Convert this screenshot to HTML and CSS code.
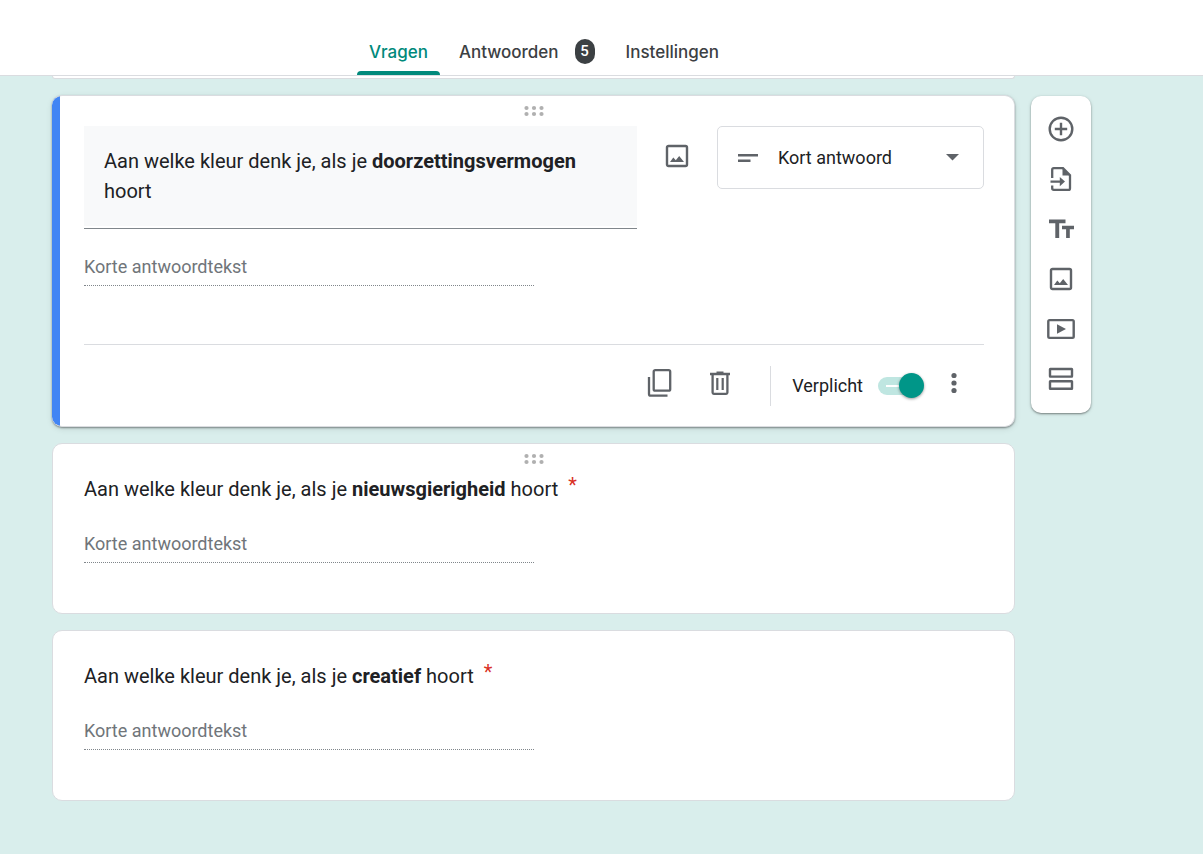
FILE: index.html
```html
<!DOCTYPE html>
<html lang="nl">
<head>
<meta charset="utf-8">
<meta name="viewport" content="width=device-width, initial-scale=1">
<title>Formulier bewerken</title>
<link rel="stylesheet" href="styles.css">
</head>
<body>
<header class="topbar">
  <nav class="tabs">
    <a class="tab tab-active" href="#vragen">Vragen</a>
    <a class="tab" href="#antwoorden">Antwoorden <span class="badge">5</span></a>
    <a class="tab" href="#instellingen">Instellingen</a>
  </nav>
</header>
<main class="editor">
  <div class="cards">
    <div class="card card-previous"></div>

    <section class="card card-active">
      <div class="drag"><svg width="20" height="12" viewBox="0 0 20 12"><g fill="#b0b0b0"><circle cx="2.5" cy="3" r="2.1"/><circle cx="10" cy="3" r="2.1"/><circle cx="17.500" cy="3" r="2.1"/><circle cx="2.5" cy="9" r="2.1"/><circle cx="10" cy="9" r="2.1"/><circle cx="17.500" cy="9" r="2.1"/></g></svg></div>
      <div class="question-row">
        <div class="question-box">
          <div class="question-edit" contenteditable="true" role="textbox" aria-label="Vraag" spellcheck="false">Aan welke kleur denk je, als je <b>doorzettingsvermogen</b> hoort</div>
        </div>
        <button class="icon-button image-button" type="button" aria-label="Afbeelding toevoegen">
          <svg width="24" height="24" viewBox="0 0 24 24"><rect x="2" y="2" width="20" height="20" rx="1.500" fill="none" stroke="#5f6368" stroke-width="2.400"/><path d="M5 18l3.300-4.600 2.500 2.900 3.400-4.300L19 18z" fill="#5f6368"/></svg>
        </button>
        <div class="type-picker">
          <svg width="20" height="8" viewBox="0 0 20 8"><path d="M0 0h20v2.500H0zM0 5.500h12.500V8H0z" fill="#5f6368"/></svg>
          <select class="type-select" aria-label="Vraagtype"><option>Kort antwoord</option></select>
          <svg class="type-arrow" width="13" height="7" viewBox="0 0 13 7"><path d="M0 0h13L6.500 6.500z" fill="#5f6368"/></svg>
        </div>
      </div>
      <input class="answer" type="text" placeholder="Korte antwoordtekst" aria-label="Korte antwoordtekst" disabled>
      <div class="card-footer">
        <button class="icon-button" type="button" aria-label="Dupliceren">
          <svg width="26" height="30" viewBox="0 0 26 30"><rect x="6.700" y="2.200" width="16.500" height="20.500" rx="1.500" fill="none" stroke="#5f6368" stroke-width="2.300"/><path d="M2 9v17q0 1.700 1.700 1.700H20.500" fill="none" stroke="#5f6368" stroke-width="2.300"/></svg>
        </button>
        <button class="icon-button" type="button" aria-label="Verwijderen">
          <svg width="20" height="24" viewBox="0 0 20 24"><path d="M6.500 0.500h7v1.300H20v2.500H0V1.800h6.500z" fill="#5f6368"/><path d="M2.600 3.500v18.100q0 1.200 1.200 1.200h12.400q1.200 0 1.200-1.200V3.500" fill="none" stroke="#5f6368" stroke-width="2.300"/><path d="M7.300 7v12M12.700 7v12" stroke="#5f6368" stroke-width="2.200"/></svg>
        </button>
        <label class="required">Verplicht<input class="toggle" type="checkbox" role="switch" checked></label>
        <button class="icon-button more-button" type="button" aria-label="Meer opties">
          <svg width="6" height="22" viewBox="0 0 6 22"><g fill="#5f6368"><circle cx="3" cy="3.500" r="2.600"/><circle cx="3" cy="11" r="2.600"/><circle cx="3" cy="18.500" r="2.600"/></g></svg>
        </button>
      </div>
    </section>

    <section class="card">
      <div class="drag"><svg width="20" height="12" viewBox="0 0 20 12"><g fill="#b0b0b0"><circle cx="2.5" cy="3" r="2.1"/><circle cx="10" cy="3" r="2.1"/><circle cx="17.500" cy="3" r="2.1"/><circle cx="2.5" cy="9" r="2.1"/><circle cx="10" cy="9" r="2.1"/><circle cx="17.500" cy="9" r="2.1"/></g></svg></div>
      <div class="question">Aan welke kleur denk je, als je <b>nieuwsgierigheid</b> hoort<span class="star">*</span></div>
      <input class="answer" type="text" placeholder="Korte antwoordtekst" aria-label="Korte antwoordtekst" disabled>
    </section>

    <section class="card">
      <div class="drag"></div>
      <div class="question">Aan welke kleur denk je, als je <b>creatief</b> hoort<span class="star">*</span></div>
      <input class="answer" type="text" placeholder="Korte antwoordtekst" aria-label="Korte antwoordtekst" disabled>
    </section>
  </div>

  <aside class="tools">
    <button class="tool" type="button" aria-label="Vraag toevoegen">
      <svg width="26" height="26" viewBox="0 0 26 26"><g fill="none" stroke="#5f6368" stroke-width="2.400"><circle cx="13" cy="13" r="11.300"/><path d="M13 6.800v12.400M6.800 13h12.400"/></g></svg>
    </button>
    <button class="tool" type="button" aria-label="Vragen importeren">
      <svg width="22" height="26" viewBox="0 0 22 26"><path d="M2.200 12V3.700q0-1.500 1.500-1.500h9.300l7 7v13q0 1.700-1.600 1.700H3.800q-1.600 0-1.600-1.600V19.500" fill="none" stroke="#5f6368" stroke-width="2.300"/><path d="M12.500 1.500v8h8zM0.500 14.400h9.300V11l5.200 4.600-5.200 4.600v-3.400H.5z" fill="#5f6368"/></svg>
    </button>
    <button class="tool" type="button" aria-label="Titel en beschrijving toevoegen">
      <svg width="26" height="22" viewBox="0 0 26 22"><path d="M1 1.500h16.500v3.700h-6.300V20H7.300V5.200H1zM14 7.800h12v3.500h-4.200V20h-3.700v-8.700H14z" fill="#5f6368"/></svg>
    </button>
    <button class="tool" type="button" aria-label="Afbeelding toevoegen">
      <svg width="24" height="24" viewBox="0 0 24 24"><rect x="2" y="2" width="20" height="20" rx="1.500" fill="none" stroke="#5f6368" stroke-width="2.400"/><path d="M5 18l3.300-4.600 2.500 2.900 3.400-4.300L19 18z" fill="#5f6368"/></svg>
    </button>
    <button class="tool" type="button" aria-label="Video toevoegen">
      <svg width="28" height="22" viewBox="0 0 28 22"><rect x="1.300" y="2.100" width="25.400" height="17.800" rx="1.300" fill="none" stroke="#5f6368" stroke-width="2.400"/><path d="M10 6.300v9.400l9-4.700z" fill="#5f6368"/></svg>
    </button>
    <button class="tool" type="button" aria-label="Gedeelte toevoegen">
      <svg width="26" height="24" viewBox="0 0 26 24"><g fill="none" stroke="#5f6368" stroke-width="2.400"><rect x="2" y="2" width="22" height="7.600" rx=".3"/><rect x="2" y="14.200" width="22" height="7.600" rx=".3"/></g></svg>
    </button>
  </aside>
</main>
</body>
</html>
```
FILE: styles.css
```css
* {
  box-sizing: border-box;
}

body {
  margin: 0;
  min-height: 100vh;
  background: #d9eeec;
  color: #202124;
  font-family: Roboto, "Liberation Sans", sans-serif;
  font-size: 18px;
}

svg {
  display: block;
  flex: none;
}

button {
  border: 0;
  padding: 0;
  background: none;
  cursor: pointer;
}

.topbar {
  display: flex;
  justify-content: center;
  padding: 28px 115px 0 0;
  background: #fff;
  border-bottom: 1px solid #dadce0;
}

.tabs {
  display: flex;
  gap: 7px;
}

.tab {
  display: flex;
  align-items: center;
  gap: 16px;
  height: 47px;
  padding: 0 12px;
  color: #3c4043;
  font-family: Inter, Roboto, sans-serif;
  font-size: 17px;
  font-weight: 500;
  text-decoration: none;
}

.tab-active {
  position: relative;
  color: #00897b;
}

.tab-active::after {
  content: "";
  position: absolute;
  right: 0;
  bottom: 0;
  left: 0;
  height: 4px;
  border-radius: 4px 4px 0 0;
  background: #00897b;
}

.badge {
  width: 20px;
  border-radius: 10px;
  background: #3c4043;
  color: #fff;
  font-family: Roboto, sans-serif;
  font-size: 15px;
  line-height: 25px;
  text-align: center;
}

.editor {
  display: flex;
  align-items: flex-start;
  gap: 16px;
  padding: 0 112px 53px 52px;
}

.cards {
  display: flex;
  flex: 1;
  flex-direction: column;
  gap: 16px;
  min-width: 0;
}

.card {
  padding: 0 30px 50px 31px;
  border: 1px solid #dadce0;
  border-radius: 10px;
  background: #fff;
}

.card-previous {
  padding: 0 0 2px;
  border-top: 0;
  border-radius: 0 0 10px 10px;
}

.card-active {
  padding: 0 30px 0 32px;
  border-left: 0;
  background: linear-gradient(#4285f4, #4285f4) 0 0 / 8px 100% no-repeat border-box #fff;
  box-shadow: 0 1px 2px rgba(0, 0, 0, 0.4), 0 2px 6px rgba(0, 0, 0, 0.1);
}

.drag {
  display: flex;
  justify-content: center;
  height: 30px;
  padding-top: 9px;
}

.question-row {
  display: flex;
  align-items: flex-start;
}

.question-box {
  flex: 1;
  min-width: 0;
  padding-bottom: 2px;
  border-bottom: 1px solid #80868b;
}

.question-edit {
  padding: 20px;
  background: #f8f9fa;
  font-size: 20px;
  line-height: 30px;
  outline: 0;
}

.icon-button {
  display: flex;
  align-items: center;
  justify-content: center;
  width: 60px;
  height: 60px;
}

.image-button {
  margin: 0 10px;
}

.type-picker {
  display: flex;
  align-items: center;
  gap: 20px;
  width: 267px;
  height: 63px;
  padding: 0 24px 0 20px;
  border: 1px solid #dadce0;
  border-radius: 5px;
}

.type-select {
  flex: 1;
  min-width: 0;
  padding: 0;
  border: 0;
  background: none;
  color: #202124;
  font: inherit;
  appearance: none;
}

.answer {
  display: block;
  width: 50%;
  height: 37px;
  margin-top: 20px;
  padding: 0 0 2px;
  border: 0;
  border-bottom: 1px dotted #80868b;
  background: none;
  font: inherit;
}

.answer::placeholder {
  color: #70757a;
  opacity: 1;
}

.question {
  padding-bottom: 2px;
  font-size: 20px;
  line-height: 30px;
}

.star {
  margin-left: 10px;
  color: #d93025;
  line-height: 20px;
  vertical-align: 4px;
}

.card-footer {
  display: flex;
  align-items: center;
  justify-content: flex-end;
  height: 82px;
  margin-top: 58px;
  border-top: 1px solid #dadce0;
}

.card-footer .icon-button {
  padding-bottom: 5px;
}

.required {
  display: flex;
  align-items: center;
  gap: 15px;
  height: 40px;
  margin-left: 20px;
  padding-left: 21px;
  border-left: 1px solid #dadce0;
}

.toggle {
  position: relative;
  width: 46px;
  height: 18px;
  margin: 0;
  appearance: none;
}

.toggle::before {
  content: "";
  display: block;
  width: 42px;
  height: 18px;
  border-radius: 9px;
  background: linear-gradient(#fff, #fff) 8px 8px / 16px 2px no-repeat #bfe6e1;
}

.toggle::after {
  content: "";
  position: absolute;
  top: -4px;
  right: 0;
  width: 25px;
  height: 25px;
  border-radius: 50%;
  background: #009688;
  box-shadow: 0 1px 3px rgba(0, 0, 0, 0.4);
}

.tools {
  display: flex;
  flex-direction: column;
  align-items: center;
  width: 60px;
  margin-top: 20px;
  padding: 8px 0 9px;
  border-radius: 10px;
  background: #fff;
  box-shadow: 0 1px 2px rgba(0, 0, 0, 0.4), 0 1px 4px rgba(0, 0, 0, 0.12);
}

.tool {
  display: flex;
  align-items: center;
  justify-content: center;
  width: 50px;
  height: 50px;
}
```
